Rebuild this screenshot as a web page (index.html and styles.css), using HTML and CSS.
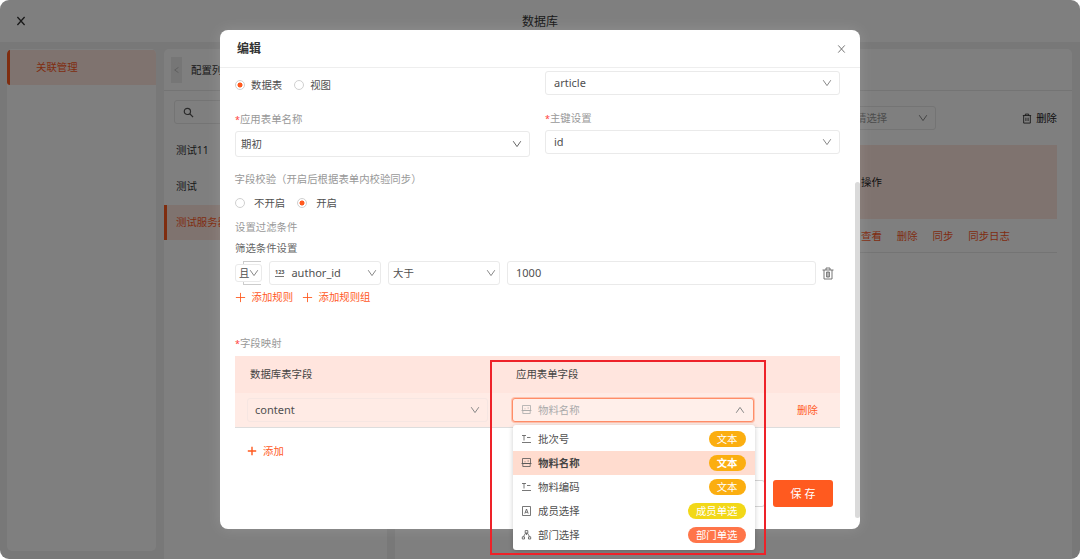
FILE: index.html
```html
<!DOCTYPE html>
<html lang="zh-CN">
<head>
<meta charset="utf-8">
<title>数据库</title>
<link rel="stylesheet" href="styles.css">
</head>
<body>
<svg class="defs" aria-hidden="true">
  <symbol id="chev" viewBox="0 0 10 8"><path d="M1.2 1.2 5 6.6 8.8 1.2"/></symbol>
  <symbol id="close" viewBox="0 0 10 10"><path d="M1.4 1 8.6 9M8.6 1 1.4 9"/></symbol>
  <symbol id="plus" viewBox="0 0 10 10"><path d="M5 .8v8.4M.8 5h8.4"/></symbol>
  <symbol id="trash" viewBox="0 0 12 13"><path d="M.5 3h11M4 3V1h4v2M2 3v9h8V3M4.6 5v5M7.4 5v5M4.6 5h2.8M4.6 10h2.8M6 5v5"/></symbol>
  <symbol id="text" viewBox="0 0 11 10"><path d="M1 1.5h4M3 1.5v5M6 3.5h3.5M1 8.5h9"/></symbol>
  <symbol id="form" viewBox="0 0 11 10"><path d="M1.5.5h8v5h-8zM.5 5.5h10M1.8 5.5v3h7.4v-3M6.6 3h1.2M3.6 3.8h.8"/></symbol>
  <symbol id="member" viewBox="0 0 11 10"><path d="M1.5.5h8v9h-8zM3.8 7.6l1.7-4.6 1.7 4.6M4.3 6.3h2.4"/></symbol>
  <symbol id="dept" viewBox="0 0 11 10"><path d="M4.2.6h2.6V3H4.2zM4.6 3 2.5 6.6M6.4 3l2.1 3.6M5.5 3v2M1.3 6.8h2.2V9H1.3zM7.5 6.8h2.2V9H7.5z"/></symbol>
</svg>
<div class="app">
  <header class="topbar">
    <svg class="ico topbar-close"><use href="#close"/></svg>
    <div class="topbar-title">数据库</div>
  </header>
  <div class="panels">
    <nav class="panel nav"><div class="nav-item">关联管理</div></nav>
    <section class="panel list">
      <div class="list-head"><span class="collapse"><svg class="ico chev left"><use href="#chev"/></svg></span>配置列表</div>
      <div class="search"><svg class="ico" viewBox="0 0 12 12"><circle cx="4.8" cy="4.8" r="3.4"/><path d="M7.4 7.4 11 11"/></svg></div>
      <div class="list-item">测试11</div>
      <div class="list-item">测试</div>
      <div class="list-item active">测试服务器</div>
    </section>
    <section class="panel detail">
      <div class="detail-head"></div>
      <div class="toolbar">
        <div class="tool-select"><span>请选择</span><svg class="ico chev"><use href="#chev"/></svg></div>
        <div class="tool-delete"><svg class="ico" viewBox="0 0 12 13"><path d="M1 3h10M4 3V1.2h4V3M2 3v9h8V3M4.7 5.5v4M7.3 5.5v4"/></svg>删除</div>
      </div>
      <div class="grid-head">操作</div>
      <div class="grid-row"><span>查看</span><span>删除</span><span>同步</span><span>同步日志</span></div>
    </section>
  </div>
  <div class="mask"></div>
</div>

<main class="modal">
  <div class="modal-head"><h1>编辑</h1><svg class="ico modal-close"><use href="#close"/></svg></div>
  <div class="modal-body">
    <div class="cols">
      <div class="col">
        <div class="radios first"><i class="radio on"></i><span>数据表</span><i class="radio"></i><span>视图</span></div>
        <div class="label"><b>*</b>应用表单名称</div>
        <div class="select tall">期初<svg class="ico chev dark"><use href="#chev"/></svg></div>
      </div>
      <div class="col right">
        <div class="select">article<svg class="ico chev"><use href="#chev"/></svg></div>
        <div class="label"><b>*</b>主键设置</div>
        <div class="select">id<svg class="ico chev"><use href="#chev"/></svg></div>
      </div>
    </div>
    <div class="label check">字段校验（开启后根据表单内校验同步）</div>
    <div class="radios second"><i class="radio"></i><span>不开启</span><i class="radio on"></i><span>开启</span></div>
    <div class="label filter">设置过滤条件</div>
    <div class="label dark">筛选条件设置</div>
    <div class="rule">
      <div class="bracket"><div class="logic">且<svg class="ico chev"><use href="#chev"/></svg></div></div>
      <div class="select field"><span class="num">123</span>author_id<svg class="ico chev"><use href="#chev"/></svg></div>
      <div class="select op">大于<svg class="ico chev"><use href="#chev"/></svg></div>
      <div class="select value">1000</div>
      <svg class="ico rule-trash"><use href="#trash"/></svg>
    </div>
    <div class="adds"><svg class="ico"><use href="#plus"/></svg><span>添加规则</span><svg class="ico"><use href="#plus"/></svg><span>添加规则组</span></div>
    <div class="label map"><b>*</b>字段映射</div>
    <div class="map-head"><span>数据库表字段</span><span>应用表单字段</span></div>
    <div class="map-row">
      <div class="select source">content<svg class="ico chev"><use href="#chev"/></svg></div>
      <div class="select target"><svg class="ico type"><use href="#form"/></svg>物料名称<svg class="ico chev up"><use href="#chev"/></svg></div>
      <span class="remove">删除</span>
    </div>
    <div class="add-map"><svg class="ico"><use href="#plus"/></svg>添加</div>
    <div class="footer"><button class="cancel"></button><button class="save">保 存</button></div>
  </div>
  <div class="scrollbar"></div>
</main>

<ul class="menu">
  <li><svg class="ico type"><use href="#text"/></svg>批次号<em>文本</em></li>
  <li class="picked"><svg class="ico type"><use href="#form"/></svg>物料名称<em>文本</em></li>
  <li><svg class="ico type"><use href="#text"/></svg>物料编码<em>文本</em></li>
  <li><svg class="ico type"><use href="#member"/></svg>成员选择<em class="yellow">成员单选</em></li>
  <li><svg class="ico type"><use href="#dept"/></svg>部门选择<em class="coral">部门单选</em></li>
</ul>
<div class="highlight"></div>
</body>
</html>
```
FILE: styles.css
```css
* { box-sizing: border-box; }
body {
  margin: 0; width: 1080px; height: 559px; overflow: hidden; position: relative; background: #fff;
  font: 10.4px/16px "Noto Sans", "Noto Sans CJK SC", sans-serif; color: #505050;
}
.defs { position: absolute; width: 0; height: 0; }
.ico { fill: none; stroke: currentColor; stroke-width: 1; flex: none; display: block; }
.chev { width: 10px; height: 8px; color: #888; }
.chev.left { transform: rotate(90deg); }
.chev.up { transform: rotate(180deg); }

.app { position: relative; width: 1080px; height: 559px; border-radius: 9px; overflow: hidden; background: #f0f0f0; }
.mask { position: absolute; inset: 0; background: rgba(0, 0, 0, .5); }
.topbar { height: 42px; background: #fff; display: flex; align-items: center; padding-left: 16px; color: #333; }
.topbar-close { width: 10px; height: 10px; stroke-width: 1.3; }
.topbar-title { flex: 1; text-align: center; padding: 2px 26px 0 0; font-size: 12px; }
.panels { display: flex; gap: 8px; padding: 7px 8px 0 7px; height: 517px; }
.panel { background: #fff; border-radius: 5px; overflow: hidden; }
.nav { width: 149px; height: 502px; flex: none; padding-top: 1px; }
.nav-item { height: 35px; line-height: 35px; border-left: 3px solid #ff5a1f; border-radius: 3px 0 0 3px; background: #ffe6df; color: #ff5a1f; padding-left: 26px; }
.list { width: 223px; height: 520px; flex: none; color: #333; }
.list-head { height: 42px; border-bottom: 1px solid #e8e8e8; display: flex; align-items: center; padding-left: 7px; gap: 9px; }
.collapse { width: 11px; height: 26px; background: #ececec; display: flex; align-items: center; justify-content: center; }
.collapse .ico { width: 7px; color: #aaa; }
.search { margin: 9px 11px 8px 10px; height: 24px; border: 1px solid #e8e8e8; border-radius: 3px; padding: 6px 8px; }
.search .ico { width: 11px; height: 11px; stroke-width: 1.3; color: #555; }
.list-item { height: 36px; line-height: 36px; padding-left: 12px; }
.list-item.active { margin-top: 1px; height: 35px; line-height: 35px; background: #ffe6df; border-left: 3px solid #ff5a1f; padding-left: 9px; color: #ff5a1f; }
.detail { flex: 1; height: 520px; color: #222; }
.detail-head { height: 42px; border-bottom: 1px solid #e8e8e8; }
.toolbar { display: flex; justify-content: space-between; align-items: center; height: 54px; padding: 0 15px 0 446px; }
.tool-select { width: 95px; height: 24px; border: 1px solid #e8e8e8; border-radius: 3px; display: flex; align-items: center; justify-content: space-between; padding: 0 7px 0 14px; color: #999; }
.tool-delete { display: flex; align-items: center; gap: 4px; }
.tool-delete .ico { width: 10px; height: 11px; }
.grid-head { margin: 0 15px; height: 74px; line-height: 74px; padding-left: 451px; background: #ffe6df; }
.grid-row { margin: 0 15px; height: 34px; line-height: 34px; padding-left: 451px; border-bottom: 1px solid #e8e8e8; display: flex; gap: 15px; color: #ff5a1f; }

.modal { position: absolute; left: 220px; top: 30px; width: 640px; height: 499px; background: #fff; border-radius: 8px; box-shadow: 0 0 14px rgba(255, 255, 255, .14); }
.modal-head { height: 38px; border-bottom: 1px solid #eee; display: flex; align-items: center; justify-content: space-between; padding: 0 14px 0 17px; }
.modal-head h1 { margin: 0; font-size: 12px; font-weight: 700; color: #333; }
.modal-close { width: 9px; height: 10px; color: #666; }
.modal-body { padding: 3px 20px 0 15px; }
.cols { display: flex; gap: 15px; height: 86px; }
.col { flex: 1; }
.radios { display: flex; align-items: center; }
.radio { width: 10px; height: 10px; border: 1px solid #d0d0d0; border-radius: 50%; background: #fff; }
.radio.on { background: radial-gradient(circle, #ff5a1f 0 2.2px, #fff 2.8px); }
.radios.first { height: 27px; margin-bottom: 13px; }
.radios.first span { margin: 0 12px 0 6px; }
.radios.second { height: 16px; margin-bottom: 8px; }
.radios.second span { margin: 0 12px 0 9px; }
.label { height: 16px; color: #999; white-space: nowrap; }
.label b { color: #ff3b3b; font-weight: 400; font-size: 9px; }
.label.dark { color: #666; margin: 5px 0; }
.label.check { margin: 14px 0 8px -0.5px; }
.label.filter { margin-bottom: 5px; }
.label.map { margin: 28px 0 5px; }
.col .label { margin-bottom: 4px; }
.select { height: 24px; border: 1px solid #eaeaea; border-radius: 3px; display: flex; align-items: center; padding: 0 8px; font-size: 11px; color: #505050; }
.select .chev { margin-left: auto; }
.select.tall { height: 26px; padding: 0 7px 0 5px; font-size: 10.4px; }
.dark.chev { color: #666; }
.right .select .chev { margin-right: -1px; }
.right .label { margin-top: 15px; }
.rule { display: flex; height: 24px; align-items: center; }
.bracket { width: 27px; height: 24px; margin-right: 7px; display: flex; align-items: center; background: linear-gradient(#ccc, #ccc) 8px 0 / 18px 1px no-repeat, linear-gradient(#ccc, #ccc) 8px 100% / 18px 1px no-repeat, linear-gradient(#ccc, #ccc) 8px 0 / 1px 24px no-repeat; }
.logic { width: 27px; height: 18px; border: 1px solid #eaeaea; border-radius: 3px; background: #fff; display: flex; align-items: center; padding-left: 3px; }
.select.field { width: 112px; padding: 0 3px 0 5px; margin-right: 7px; }
.num { font-size: 5.5px; line-height: 6px; font-weight: 700; border-bottom: 1px solid #777; height: 8px; margin-right: 7px; }
.select.op { width: 112px; padding: 0 3px 0 4px; font-size: 10.4px; margin-right: 7px; }
.select.value { width: 309px; margin-right: 6px; }
.rule-trash { width: 12px; height: 13px; color: #666; stroke-width: .9; }
.adds { display: flex; align-items: center; height: 20px; margin-top: 2px; color: #ff5a1f; }
.adds .ico { width: 11px; height: 11px; stroke-width: .8; }
.adds span { margin: 0 9px 0 5.5px; }
.map-head { height: 37px; line-height: 37px; background: #ffe5de; display: flex; color: #444; padding-left: 15px; }
.map-head span { width: 266px; }
.map-row { height: 35px; background: #ffebe5; border-bottom: 1px solid #ddd; display: flex; align-items: center; padding-left: 12px; }
.select.source { width: 241px; border-color: #f6e6e2; padding: 0 7px; }
.select.target { width: 242px; margin-left: 24px; border: 1px solid #ff8d68; box-shadow: 0 0 0 1px rgba(255, 120, 75, .35); color: #aaa; font-size: 10.4px; background: #ffefea; }
.type { width: 11px; height: 10px; margin-right: 6px; stroke-width: .8; color: #555; }
.target .type { color: #aaa; }
.remove { color: #ff5a1f; margin-left: 43px; }
.add-map { display: flex; align-items: center; gap: 6px; height: 18px; margin: 14px 0 0 12px; color: #ff5a1f; }
.add-map .ico { width: 10px; height: 10px; stroke-width: 1.4; }
.footer { display: flex; justify-content: flex-end; gap: 8px; margin-top: 20px; padding-right: 7px; }
button { width: 60px; height: 27px; border: 1px solid #d5d5d5; border-radius: 3px; background: #fff; font: inherit; color: #555; padding: 0; }
button.save { border: 0; background: #ff5a1f; color: #fff; font-size: 11px; }
.scrollbar { position: absolute; right: 0; top: 152px; width: 5px; height: 336px; border-radius: 3px; background: #dadada; }

.menu { position: absolute; left: 512.5px; top: 425px; width: 242px; height: 125px; margin: 0; padding: 2.5px 0 2px; list-style: none; background: #fff; border-radius: 3px; box-shadow: 0 1px 5px rgba(0, 0, 0, .2); }
.menu li { height: 23.9px; display: flex; align-items: center; padding: 0 9px 0 8.5px; color: #505050; }
.menu .picked { background: #ffdccf; font-weight: 700; color: #444; }
.menu em { margin-left: auto; height: 16px; line-height: 16px; border-radius: 8px; padding: 0 8px; background: #fbae10; color: #fff; font-style: normal; }
.menu em.yellow { background: #f2d818; }
.menu em.coral { background: #ff7549; }
.highlight { position: absolute; left: 490px; top: 360px; width: 276px; height: 195px; border: 2px solid #ee2229; }
```
